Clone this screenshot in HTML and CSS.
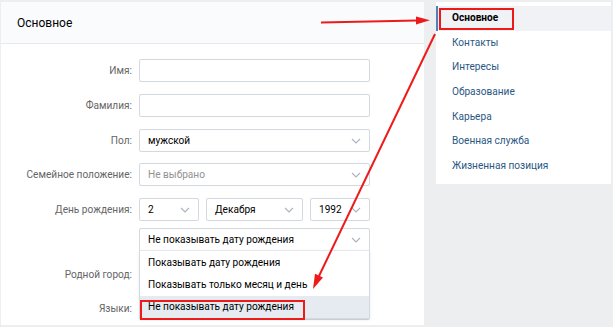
FILE: index.html
```html
<!DOCTYPE html>
<html lang="ru">
<head>
<meta charset="utf-8">
<title>Основное</title>
<link rel="stylesheet" href="styles.css">
</head>
<body>
<div class="page">
  <main class="panel">
    <header class="panel-head">Основное</header>
    <form class="form">
      <div class="row">
        <label class="label">Имя:</label>
        <div class="field input"></div>
      </div>
      <div class="row">
        <label class="label">Фамилия:</label>
        <div class="field input"></div>
      </div>
      <div class="row">
        <label class="label">Пол:</label>
        <div class="field select"><span class="value">мужской</span><svg class="chev" viewBox="0 0 10 6"><polyline points="1,1 5,5 9,1"/></svg></div>
      </div>
      <div class="row">
        <label class="label">Семейное положение:</label>
        <div class="field select"><span class="value placeholder">Не выбрано</span><svg class="chev" viewBox="0 0 10 6"><polyline points="1,1 5,5 9,1"/></svg></div>
      </div>
      <div class="row row-birth">
        <label class="label">День рождения:</label>
        <div class="birth">
          <div class="field select day"><span class="value">2</span><svg class="chev" viewBox="0 0 10 6"><polyline points="1,1 5,5 9,1"/></svg></div>
          <div class="field select month"><span class="value">Декабря</span><svg class="chev" viewBox="0 0 10 6"><polyline points="1,1 5,5 9,1"/></svg></div>
          <div class="field select year"><span class="value">1992</span><svg class="chev" viewBox="0 0 10 6"><polyline points="1,1 5,5 9,1"/></svg></div>
        </div>
      </div>
      <div class="row">
        <span class="label"></span>
        <div class="field select open"><span class="value">Не показывать дату рождения</span><svg class="chev" viewBox="0 0 10 6"><polyline points="1,1 5,5 9,1"/></svg>
          <ul class="options">
            <li class="option">Показывать дату рождения</li>
            <li class="option">Показывать только месяц и день</li>
            <li class="option active">Не показывать дату рождения</li>
          </ul>
        </div>
      </div>
      <div class="row">
        <label class="label">Родной город:</label>
        <div class="field input"></div>
      </div>
      <div class="row">
        <label class="label">Языки:</label>
        <div class="field select"></div>
      </div>
    </form>
  </main>
  <nav class="side">
    <a class="side-item current">Основное</a>
    <a class="side-item">Контакты</a>
    <a class="side-item">Интересы</a>
    <a class="side-item">Образование</a>
    <a class="side-item">Карьера</a>
    <a class="side-item">Военная служба</a>
    <a class="side-item">Жизненная позиция</a>
  </nav>
</div>
<svg class="marks" width="613" height="327" viewBox="0 0 613 327">
  <g fill="none" stroke="#ee1a1a" stroke-width="2">
    <rect x="440" y="9" width="73" height="20"/>
    <rect x="141" y="301" width="163" height="18"/>
    <line x1="321" y1="22.5" x2="417" y2="20.5"/>
    <line x1="435" y1="34" x2="319" y2="276"/>
  </g>
  <g fill="#ee1a1a">
    <polygon points="430,20.3 416,16.5 416,24.5"/>
    <polygon points="313,289 323,277.5 315,273.8"/>
  </g>
</svg>
</body>
</html>
```

FILE: styles.css
```css
* { box-sizing: border-box; }

html, body {
  margin: 0;
  padding: 0;
}

body {
  background: #edeef0;
  font-family: Roboto, "Open Sans", "Liberation Sans", sans-serif;
  font-size: 10.1px;
  color: #000;
  width: 613px;
  height: 327px;
  overflow: hidden;
  position: relative;
}

.page {
  display: flex;
  align-items: flex-start;
  gap: 12px;
  padding: 2px 0 0 1px;
}

.panel {
  width: 423px;
  height: 323px;
  background: #fff;
  overflow: hidden;
}

.panel-head {
  height: 42px;
  border-bottom: 1px solid #e7e8ec;
  background: #fafbfc;
  padding: 0 16px;
  display: flex;
  align-items: center;
  font-size: 12px;
  color: #000;
}

.form {
  padding-top: 15px;
  display: flex;
  flex-direction: column;
  gap: 11.75px;
}

.row {
  display: flex;
  align-items: center;
  gap: 7px;
}

.row-birth {
  margin-bottom: -5px;
}

.label {
  width: 131px;
  flex: none;
  text-align: right;
  color: #656565;
}

.field {
  position: relative;
  width: 231px;
  height: 23px;
  border: 1px solid #d3d9de;
  border-radius: 2px;
  background: #fff;
  display: flex;
  align-items: center;
  padding: 0 8px;
}

.value {
  color: #000;
  white-space: nowrap;
}

.placeholder {
  color: #929292;
}

.chev {
  position: absolute;
  right: 8px;
  top: 8px;
  width: 10px;
  height: 6px;
  fill: none;
  stroke: #aab4bf;
  stroke-width: 1.1;
}

.birth {
  display: flex;
  gap: 7px;
}

.day, .year { width: 60px; }
.month { width: 97px; }

.open {
  z-index: 2;
  border-radius: 2px 2px 0 0;
}

.options {
  position: absolute;
  left: -1px;
  right: -1px;
  top: 21px;
  margin: 0;
  padding: 1px 0 0;
  list-style: none;
  background: #fff;
  border: 1px solid #d3d9de;
  border-top-color: #e7e8ec;
  box-shadow: 0 1px 3px rgba(0, 0, 0, 0.08);
}

.option {
  height: 22px;
  line-height: 22px;
  padding: 0 8px;
  color: #000;
  white-space: nowrap;
}

.option.active {
  background: #e5ebf1;
}

.side {
  width: 175px;
  background: #fff;
  padding: 4px 0 5px;
  display: flex;
  flex-direction: column;
}

.side-item {
  height: 24.7px;
  line-height: 24.7px;
  padding-left: 16px;
  color: #2a5885;
  text-decoration: none;
}

.side-item.current {
  background: #f0f2f5;
  border-left: 2px solid #5181b8;
  padding-left: 14px;
  font-weight: bold;
  color: #000;
}

.marks {
  position: absolute;
  left: 0;
  top: 0;
  pointer-events: none;
  z-index: 5;
}
```
